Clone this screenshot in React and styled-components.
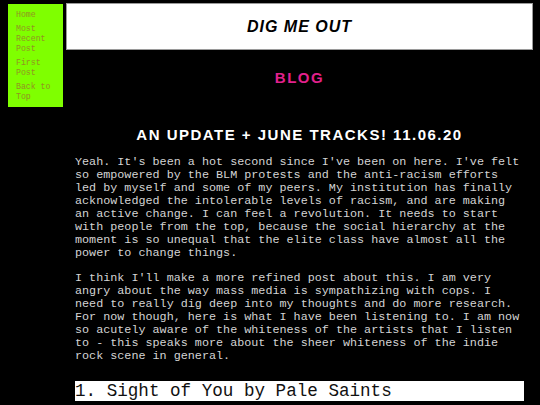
import React from "react";
import styled, { createGlobalStyle } from "styled-components";

const GlobalStyle = createGlobalStyle`
  html, body {
    margin: 0;
    padding: 0;
    background: #000000;
  }
`;

const Page = styled.div`
  display: flex;
  align-items: flex-start;
  gap: 3px;
  padding: 3px 7px 0 8px;
  width: 540px;
  height: 405px;
  box-sizing: border-box;
  overflow: hidden;
  background: #000000;
`;

const SideNav = styled.nav`
  flex: 0 0 55px;
  box-sizing: border-box;
  margin-top: 1px;
  padding: 6px 8px 5px 8px;
  background: #7fff00;
  display: flex;
  flex-direction: column;
  gap: 4px;
`;

const NavLink = styled.a`
  display: block;
  font-family: "Liberation Mono", "Courier New", monospace;
  font-size: 8.2px;
  line-height: 10px;
  color: #939322;
  text-decoration: none;
`;

const Main = styled.main`
  flex: 1;
  display: flex;
  flex-direction: column;
  align-items: stretch;
`;

const Header = styled.header`
  height: 47px;
  box-sizing: border-box;
  background: #ffffff;
  border: 1px solid #9a9a9a;
  display: flex;
  align-items: center;
  justify-content: center;
`;

const SiteTitle = styled.h1`
  margin: 0;
  font-family: "Liberation Sans", Arial, sans-serif;
  font-style: italic;
  font-weight: 700;
  font-size: 16px;
  letter-spacing: 1px;
  color: #000000;
`;

const Section = styled.h2`
  margin: ${(props) => props.gap || "18px"} 0 0;
  text-align: center;
  font-family: "Liberation Sans", Arial, sans-serif;
  font-weight: 700;
  font-size: 15px;
  letter-spacing: 1.5px;
  color: ${(props) => props.color || "#ffffff"};
  line-height: 17px;
`;

const Content = styled.div`
  padding: 0 9px;
  margin-top: 13px;
`;

const Para = styled.p`
  margin: 0 0 12px;
  font-family: "Liberation Mono", "Courier New", monospace;
  font-size: 11.75px;
  line-height: 13px;
  color: #d4d4d4;
`;

const Track = styled.h3`
  margin: 18px 0 0;
  height: 20px;
  background: #ffffff;
  font-family: "Liberation Mono", "Courier New", monospace;
  font-weight: 400;
  font-size: 17.6px;
  line-height: 20px;
  color: #111111;
  white-space: nowrap;
`;

const links = [
  { label: "Home", href: "#home" },
  { label: "Most Recent Post", href: "#recent" },
  { label: "First Post", href: "#first" },
  { label: "Back to Top", href: "#top" },
];

const App = () => {
  return (
    <>
      <GlobalStyle />
      <Page>
        <SideNav>
          {links.map((l) => (
            <NavLink key={l.label} href={l.href}>
              {l.label}
            </NavLink>
          ))}
        </SideNav>
        <Main>
          <Header>
            <SiteTitle>DIG ME OUT</SiteTitle>
          </Header>
          <Section color="#e2208c" gap="19px">BLOG</Section>
          <Section gap="40px">AN UPDATE + JUNE TRACKS! 11.06.20</Section>
          <Content>
            <Para>
              Yeah. It's been a hot second since I've been on here. I've felt so
              empowered by the BLM protests and the anti-racism efforts led by
              myself and some of my peers. My institution has finally acknowledged
              the intolerable levels of racism, and are making an active change. I
              can feel a revolution. It needs to start with people from the top,
              because the social hierarchy at the moment is so unequal that the
              elite class have almost all the power to change things.
            </Para>
            <Para>
              I think I'll make a more refined post about this. I am very angry
              about the way mass media is sympathizing with cops. I need to really
              dig deep into my thoughts and do more research. For now though, here
              is what I have been listening to. I am now so acutely aware of the
              whiteness of the artists that I listen to - this speaks more about
              the sheer whiteness of the indie rock scene in general.
            </Para>
            <Track>1. Sight of You by Pale Saints</Track>
          </Content>
        </Main>
      </Page>
    </>
  );
};

export default App;
